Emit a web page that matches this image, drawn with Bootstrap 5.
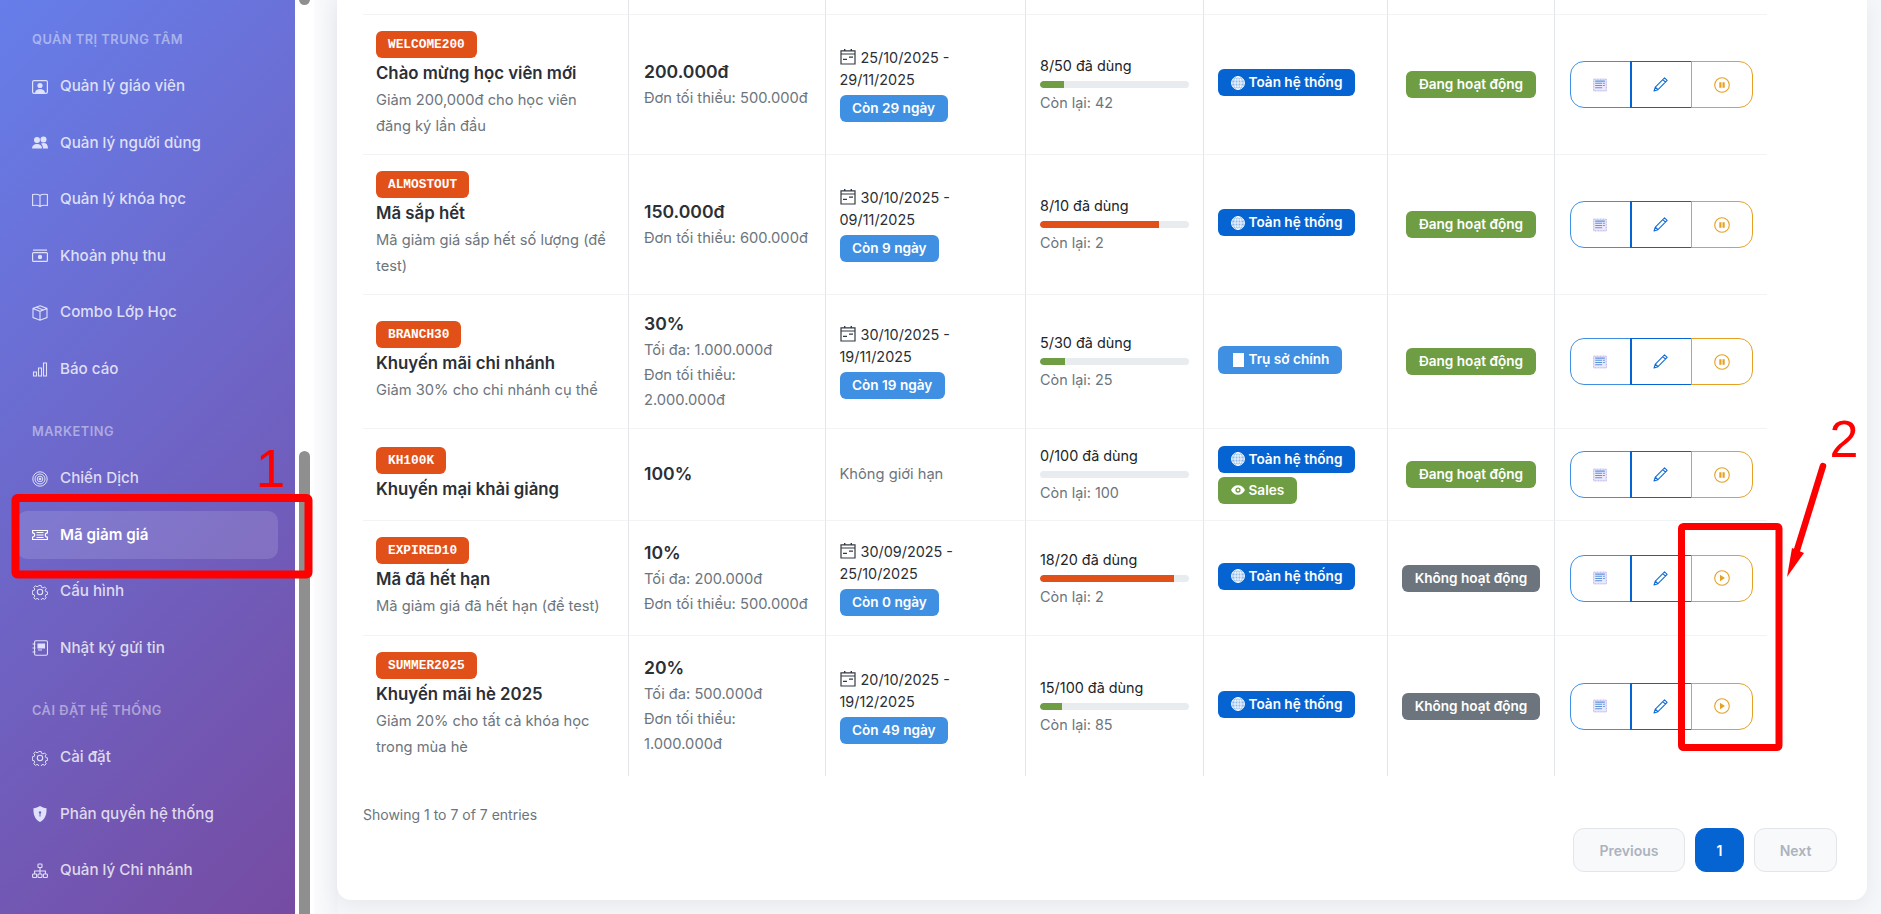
<!doctype html>
<html lang="vi"><head><meta charset="utf-8">
<link rel="stylesheet" href="https://cdn.jsdelivr.net/npm/bootstrap@5.3.0/dist/css/bootstrap.min.css">
<style>
html,body{height:914px;overflow:hidden}
body{font-family:Inter,"Noto Sans",sans-serif;background:linear-gradient(90deg,#fbfbfd 314px,#f2f3f7 337px,#f5f6fa 338px);color:#2b2f36;font-size:14px;position:relative}
.side{width:295px;height:914px;flex:none;background:linear-gradient(135deg,#667eea 0%,#764ba2 100%);padding:29px 16px 0 17px}
.side-head{font-size:12.8px;font-weight:600;letter-spacing:.5px;line-height:22px;height:22px;color:rgba(255,255,255,.45);padding-left:15px;text-transform:uppercase}
.side-head.later{margin-top:28px}
.side-item{display:flex;align-items:center;gap:12px;height:48px;margin-bottom:8.5px;padding-left:15px;border-radius:10px;color:rgba(255,255,255,.78);font-weight:500;font-size:15.2px;text-decoration:none;width:261px}
.side-head + .side-item{margin-top:11.500px}
.side-item.on{background:rgba(255,255,255,.13);color:#fff;font-weight:600}
.side-item svg{width:16px;height:16px;flex:none}
.gutter{width:19px;flex:none;background:#fff;position:relative}
.thumb{position:absolute;left:4px;width:11px;background:#8f8f8f;border-radius:6px}
.thumb.a{top:-8px;height:13px}
.thumb.b{top:451px;height:480px}
.panel{width:1530px;height:900px;flex:none;margin-left:23px;background:#fff;border-radius:0 0 14px 14px;box-shadow:0 5px 20px rgba(0,0,0,.06);padding:0 30px 0 26px}
.promo{table-layout:fixed;width:1404px;margin:0;border-collapse:separate;border-spacing:0}
.promo td{padding:0 14px;border-right:1px solid #e2e5ea;border-bottom:1px solid #f1f3f5;vertical-align:middle;box-shadow:none;color:inherit;background:none}
.promo td:first-child{padding-left:13px}
.promo td:nth-child(2){padding-left:15px}
.promo td:last-child{border-right:0;padding:0;text-align:center}
.promo tr:last-child td{border-bottom:0}
.promo tr.stub td{height:15px}
.r1{height:140px}.r3{height:134px}.r4{height:92px}.r5{height:115px}.r6{height:140px}
.tag{display:inline-block;height:27px;line-height:27px;border-radius:6px;padding:0 12.5px;font-size:13.6px;font-weight:600;color:#fff;white-space:nowrap;vertical-align:top}
.code{font-family:"Liberation Mono",monospace;font-weight:700;font-size:12.8px;background:#e2501a;padding:0 12px}
.nm{font-size:16.8px;font-weight:600;line-height:24px;margin-top:3px;margin-bottom:2px;color:#2b2f36}
.ds{font-size:14.7px;line-height:26px;color:#6c757d}
.val{font-size:17.6px;font-weight:600;line-height:26px;margin-bottom:1px;color:#2b2f36}
.sub{font-size:14.7px;line-height:25px;color:#6c757d}
.dt{font-size:14.4px;line-height:22px;color:#2b2f36}
.dt svg{width:16px;height:16px;vertical-align:-2px;margin-right:1px}
.blue{background:#3f90e2}.prim{background:#0564d1}.grn{background:#6f9d43}.gry{background:#6c757d}
.usetxt{font-size:14.4px;line-height:22px}
.mybar{height:7px;margin:4px 0;background:#e9ecef;border-radius:4px}
.mybar .progress-bar{border-radius:4px 0 0 4px}
.scope{display:inline-flex;align-items:center;gap:4px;margin-bottom:4px}
.scope svg{width:14px;height:14px;flex:none}
.bldg{display:block;width:11px;height:14px;background:#fff;margin:0 1px 0 2px}
.tall{height:28px}
.tagstack{display:flex;flex-direction:column;align-items:flex-start;gap:4px}
.tagstack .scope{margin-bottom:0}
.acts{display:inline-flex;vertical-align:middle}
.act{width:61px;height:47px;display:flex;align-items:center;justify-content:center;background:#fff;padding:0;border:1px solid;border-radius:0;margin-left:-1px}
.act:first-child{width:61px;margin-left:0;border-color:#3f90e2;border-radius:14px 0 0 14px}
.act:nth-child(2){width:62px;border-color:#0564d1;border-left-width:2px;padding-right:2px}
.act:nth-child(3){width:62px;border-color:#e6a023;border-radius:0 14px 14px 0}
.act svg{width:16px;height:16px}
.act:first-child svg{width:14px;height:14px}
.act:nth-child(2) svg{width:15px;height:15px}
.foot{display:flex;flex-direction:column}
.showing{font-size:14px;color:#6c757d;line-height:22px;margin-top:28px}
.pgs{display:flex;justify-content:flex-end;gap:10px;margin-top:2px}
.pg{height:44px;display:flex;align-items:center;justify-content:center;border-radius:11px;font-weight:600;font-size:14px;border:1px solid #e2e5ea;background:#f8f9fb;color:#adb3bd;text-decoration:none}
.pg.now{background:#0564d1;border-color:#0564d1;color:#fff}
.markup{position:absolute;left:0;top:0;width:1881px;height:914px;pointer-events:none}
</style></head><body>
<div class="d-flex">
<nav class="side">
<div class="side-head">Quản trị trung tâm</div>
<a class="side-item" href="#"><svg viewBox="0 0 16 16" fill="#dfe2fa"><path d="M2 1h12a2 2 0 0 1 2 2v10a2 2 0 0 1-2 2H2a2 2 0 0 1-2-2V3a2 2 0 0 1 2-2zm0 1.2a.8.8 0 0 0-.8.8v10c0 .4.4.8.8.8h12c.4 0 .8-.4.8-.8V3a.8.8 0 0 0-.8-.8z"/><circle cx="8" cy="6.5" r="2.6"/><path d="M3 14c.4-3 2.400-4 5-4s4.600 1 5 4z"/></svg>Quản lý giáo viên</a>
<a class="side-item" href="#"><svg viewBox="0 0 16 16" fill="#dfe2fa"><circle cx="5" cy="5" r="3"/><circle cx="11.500" cy="4.500" r="3"/><path d="M0 13.500c0-3 2-4.500 5-4.500s5 1.500 5 4.500zM11 13.500c0-2-.6-3.600-2-4.800.7-.4 1.600-.7 2.500-.7 2.800 0 4.500 1.800 4.500 5.500z"/></svg>Quản lý người dùng</a>
<a class="side-item" href="#"><svg viewBox="0 0 16 16" fill="none" stroke="#dfe2fa" stroke-width="1.100"><path d="M8 3.500C6.500 2.300 3.500 2 .6 2.500v11c2.900-.5 5.900-.2 7.400 1 1.500-1.200 4.500-1.500 7.400-1v-11C12.500 2 9.500 2.300 8 3.500zM8 3.500v11"/></svg>Quản lý khóa học</a>
<a class="side-item" href="#"><svg viewBox="0 0 16 16" fill="#dfe2fa"><path d="M1 1.500h14v1.200H1z"/><path fill-rule="evenodd" d="M1.500 4h13A1.500 1.500 0 0 1 16 5.500v7a1.500 1.500 0 0 1-1.500 1.500h-13A1.500 1.500 0 0 1 0 12.500v-7A1.500 1.500 0 0 1 1.500 4zm0 1.200a.3.3 0 0 0-.3.300v7c0 .2.100.3.300.3h13c.2 0 .3-.1.3-.3v-7a.3.3 0 0 0-.3-.3z"/><circle cx="8" cy="9" r="2.200"/></svg>Khoản phụ thu</a>
<a class="side-item" href="#"><svg viewBox="0 0 16 16" fill="none" stroke="#dfe2fa" stroke-width="1.100"><path d="M8 .8l7 2.700v9L8 15.200l-7-2.700v-9zM1 3.500l7 2.800 7-2.800M8 6.300v8.900M4.500 2.200l7 2.800"/></svg>Combo Lớp Học</a>
<a class="side-item" href="#"><svg viewBox="0 0 16 16" fill="none" stroke="#dfe2fa" stroke-width="1.100"><path d="M1.500 11h3v4h-3zM6.500 7h3v8h-3zM11.500 2h3v13h-3z"/></svg>Báo cáo</a>
<div class="side-head later">Marketing</div>
<a class="side-item" href="#"><svg viewBox="0 0 16 16" fill="none" stroke="#dfe2fa"><circle cx="8" cy="8" r="7.200"/><circle cx="8" cy="8" r="5"/><circle cx="8" cy="8" r="2.800"/><circle cx="8" cy="8" r="1" fill="#dfe2fa"/></svg>Chiến Dịch</a>
<a class="side-item on" href="#"><svg viewBox="0 0 16 16" fill="none" stroke="#fff" stroke-width="1.100"><path d="M.6 3.500h14.800v2.400a2.100 2.100 0 0 0 0 4.200v2.400H.6v-2.400a2.100 2.100 0 0 0 0-4.200zM4.500 5.500h7M4.500 8h7M4.500 10.500h7"/></svg>Mã giảm giá</a>
<a class="side-item" href="#"><svg viewBox="0 0 16 16" fill="none" stroke="#dfe2fa" stroke-width="1.100"><circle cx="8" cy="8" r="2.700"/><path d="M6.700.8h2.600l.4 2 1.600.7 1.800-1.100 1.800 1.800-1.100 1.800.7 1.600 2 .4v2.600l-2 .4-.7 1.600 1.100 1.800-1.800 1.800-1.800-1.100-1.600.7-.4 2H6.700l-.4-2-1.600-.7-1.800 1.100-1.800-1.800 1.100-1.800-.7-1.600-2-.4V6.700l2-.4.7-1.600L1.100 2.900l1.800-1.800 1.800 1.100 1.600-.7z" transform="translate(.8 .8) scale(.9)"/></svg>Cấu hình</a>
<a class="side-item" href="#"><svg viewBox="0 0 16 16" fill="none" stroke="#dfe2fa" stroke-width="1.100"><rect x="2.500" y=".8" width="13" height="14.400" rx="1.500"/><path d="M.5 4h3M.5 8h3M.5 12h3"/><path d="M6 4h6.500v4H6zM6 10h4" fill="#dfe2fa"/></svg>Nhật ký gửi tin</a>
<div class="side-head later">Cài đặt hệ thống</div>
<a class="side-item" href="#"><svg viewBox="0 0 16 16" fill="none" stroke="#dfe2fa" stroke-width="1.100"><circle cx="8" cy="8" r="2.700"/><path d="M6.700.8h2.600l.4 2 1.600.7 1.800-1.100 1.800 1.800-1.100 1.800.7 1.600 2 .4v2.600l-2 .4-.7 1.600 1.100 1.800-1.800 1.800-1.800-1.100-1.600.7-.4 2H6.700l-.4-2-1.600-.7-1.800 1.100-1.800-1.800 1.100-1.800-.7-1.600-2-.4V6.700l2-.4.7-1.600L1.100 2.900l1.800-1.800 1.800 1.100 1.600-.7z" transform="translate(.8 .8) scale(.9)"/></svg>Cài đặt</a>
<a class="side-item" href="#"><svg viewBox="0 0 16 16"><path fill="#dfe2fa" d="M8 0c2 1.300 4.200 2 6.500 2.200.4 6.500-1.500 11-6.500 13.800C3 13.200 1.100 8.700 1.500 2.200 3.800 2 6 1.300 8 0z"/><circle cx="8" cy="6.500" r="1.200" fill="#7060c0"/><path d="M7.500 7.500h1v3h-1z" fill="#7060c0"/></svg>Phân quyền hệ thống</a>
<a class="side-item" href="#"><svg viewBox="0 0 16 16" fill="none" stroke="#dfe2fa" stroke-width="1.100"><rect x="6" y="1" width="4" height="3.500" rx=".8"/><rect x=".6" y="11" width="4" height="3.500" rx=".8"/><rect x="6" y="11" width="4" height="3.500" rx=".8"/><rect x="11.400" y="11" width="4" height="3.500" rx=".8"/><path d="M8 4.500V11M2.600 11V8h10.800v3"/></svg>Quản lý Chi nhánh</a>
</nav>
<div class="gutter"><div class="thumb a"></div><div class="thumb b"></div></div>
<main class="panel">
<svg width="0" height="0" class="position-absolute">
<defs>
<symbol id="cal" viewBox="0 0 16 16"><path fill="none" stroke="#333a42" stroke-width="1.200" d="M1 1.800h14v13.200H1zM1 5h14"/><path fill="#333a42" d="M4 0h1.400v2H4zM10.600 0H12v2h-1.400zM3 9.800h4v1.200H3zM9 7.500h4v1.200H9z"/></symbol>
<symbol id="globe" viewBox="0 0 16 16"><g fill="none" stroke="#fff" stroke-width="1"><circle cx="8" cy="8" r="7.400" fill="#fff" fill-opacity=".55"/><ellipse cx="8" cy="8" rx="3.500" ry="7.400"/><path d="M8 .6v14.800M.6 8h14.800M1.500 4.500h13M1.500 11.500h13"/></g></symbol>
<symbol id="eye" viewBox="0 0 16 16"><path fill="#fff" fill-rule="evenodd" d="M8 2.500c3.500 0 6.300 2.200 8 5.500-1.700 3.300-4.500 5.500-8 5.500S1.700 11.300 0 8c1.700-3.300 4.500-5.500 8-5.500zM8 5a3 3 0 1 0 0 6 3 3 0 0 0 0-6z"/><circle cx="8" cy="8" r="1.500" fill="#fff"/></symbol>
<symbol id="view" viewBox="0 0 16 16"><rect x=".8" y="1.300" width="14.400" height="13.400" fill="#eceafb" stroke="#b6a9ea" stroke-width="1.100" stroke-dasharray="1.200 .6"/><path fill="#5a94de" d="M2.500 2.800h11v1.400h-11zM2.500 5.500h8v1.200h-8zM2.500 8h8v1.200h-8zM2.500 10.500h8v1.200h-8zM11.500 5.500h2v1.200h-2zM11.500 8h2v1.200h-2z"/></symbol>
<symbol id="pen" viewBox="0 0 16 16"><path fill="none" stroke="#0f6ad6" stroke-width="1.150" stroke-linejoin="round" d="M12.300.9l2.800 2.800-9.800 9.800-4.200 1.400 1.400-4.200zM10.500 2.700l2.800 2.800M2.500 10.700l2.800 2.800"/></symbol>
<symbol id="pause" viewBox="0 0 16 16"><circle cx="8" cy="8" r="7.300" fill="none" stroke="#e6a023" stroke-width="1.100"/><path fill="#e6a023" d="M5.300 5.300h2.200v5.400H5.300zM8.500 5.300h2.200v5.400H8.500z"/></symbol>
<symbol id="play" viewBox="0 0 16 16"><circle cx="8" cy="8" r="7.300" fill="none" stroke="#e6a023" stroke-width="1.100"/><path fill="#e6a023" d="M6 4.800l5 3.200-5 3.200z"/></symbol>
</defs></svg>
<table class="table promo">
<colgroup><col style="width:266px"><col style="width:196.500px"><col style="width:200.500px"><col style="width:178px"><col style="width:184px"><col style="width:167px"><col style="width:212px"></colgroup>
<tbody>
<tr class="stub"><td></td><td></td><td></td><td></td><td></td><td></td><td></td></tr>
<tr class="r1">
<td><span class="tag code">WELCOME200</span><div class="nm">Chào mừng học viên mới</div><div class="ds">Giảm 200,000đ cho học viên đăng ký lần đầu</div></td>
<td><div class="val">200.000đ</div><div class="sub">Đơn tối thiểu: 500.000đ</div></td>
<td><div class="dt"><svg><use href="#cal"/></svg> 25/10/2025 - 29/11/2025</div><span class="tag blue mt-1">Còn 29 ngày</span></td>
<td><div class="usetxt">8/50 đã dùng</div><div class="progress mybar"><div class="progress-bar grn" style="width:16%"></div></div><div class="usetxt text-secondary">Còn lại: 42</div></td>
<td><span class="tag prim scope"><svg><use href="#globe"/></svg>Toàn hệ thống</span></td>
<td class="text-center"><span class="tag grn">Đang hoạt động</span></td>
<td><div class="acts"><button class="btn act"><svg><use href="#view"/></svg></button><button class="btn act"><svg><use href="#pen"/></svg></button><button class="btn act"><svg><use href="#pause"/></svg></button></div></td>
</tr>
<tr class="r1">
<td><span class="tag code">ALMOSTOUT</span><div class="nm">Mã sắp hết</div><div class="ds">Mã giảm giá sắp hết số lượng (để test)</div></td>
<td><div class="val">150.000đ</div><div class="sub">Đơn tối thiểu: 600.000đ</div></td>
<td><div class="dt"><svg><use href="#cal"/></svg> 30/10/2025 - 09/11/2025</div><span class="tag blue mt-1">Còn 9 ngày</span></td>
<td><div class="usetxt">8/10 đã dùng</div><div class="progress mybar"><div class="progress-bar" style="width:80%;background:#e2501a"></div></div><div class="usetxt text-secondary">Còn lại: 2</div></td>
<td><span class="tag prim scope"><svg><use href="#globe"/></svg>Toàn hệ thống</span></td>
<td class="text-center"><span class="tag grn">Đang hoạt động</span></td>
<td><div class="acts"><button class="btn act"><svg><use href="#view"/></svg></button><button class="btn act"><svg><use href="#pen"/></svg></button><button class="btn act"><svg><use href="#pause"/></svg></button></div></td>
</tr>
<tr class="r3">
<td><span class="tag code">BRANCH30</span><div class="nm">Khuyến mãi chi nhánh</div><div class="ds">Giảm 30% cho chi nhánh cụ thể</div></td>
<td><div class="val">30%</div><div class="sub">Tối đa: 1.000.000đ</div><div class="sub">Đơn tối thiểu: 2.000.000đ</div></td>
<td><div class="dt"><svg><use href="#cal"/></svg> 30/10/2025 - 19/11/2025</div><span class="tag blue mt-1">Còn 19 ngày</span></td>
<td><div class="usetxt">5/30 đã dùng</div><div class="progress mybar"><div class="progress-bar grn" style="width:16.670%"></div></div><div class="usetxt text-secondary">Còn lại: 25</div></td>
<td><span class="tag blue scope tall"><i class="bldg"></i>Trụ sở chính</span></td>
<td class="text-center"><span class="tag grn">Đang hoạt động</span></td>
<td><div class="acts"><button class="btn act"><svg><use href="#view"/></svg></button><button class="btn act"><svg><use href="#pen"/></svg></button><button class="btn act"><svg><use href="#pause"/></svg></button></div></td>
</tr>
<tr class="r4">
<td><span class="tag code">KH100K</span><div class="nm">Khuyến mại khải giảng</div></td>
<td><div class="val">100%</div></td>
<td><div class="sub">Không giới hạn</div></td>
<td><div class="usetxt">0/100 đã dùng</div><div class="progress mybar"><div class="progress-bar grn" style="width:0%"></div></div><div class="usetxt text-secondary">Còn lại: 100</div></td>
<td><div class="tagstack"><span class="tag prim scope"><svg><use href="#globe"/></svg>Toàn hệ thống</span><span class="tag grn scope"><svg><use href="#eye"/></svg>Sales</span></div></td>
<td class="text-center"><span class="tag grn">Đang hoạt động</span></td>
<td><div class="acts"><button class="btn act"><svg><use href="#view"/></svg></button><button class="btn act"><svg><use href="#pen"/></svg></button><button class="btn act"><svg><use href="#pause"/></svg></button></div></td>
</tr>
<tr class="r5">
<td><span class="tag code">EXPIRED10</span><div class="nm">Mã đã hết hạn</div><div class="ds">Mã giảm giá đã hết hạn (để test)</div></td>
<td><div class="val">10%</div><div class="sub">Tối đa: 200.000đ</div><div class="sub">Đơn tối thiểu: 500.000đ</div></td>
<td><div class="dt"><svg><use href="#cal"/></svg> 30/09/2025 - 25/10/2025</div><span class="tag blue mt-1">Còn 0 ngày</span></td>
<td><div class="usetxt">18/20 đã dùng</div><div class="progress mybar"><div class="progress-bar" style="width:90%;background:#e2501a"></div></div><div class="usetxt text-secondary">Còn lại: 2</div></td>
<td><span class="tag prim scope"><svg><use href="#globe"/></svg>Toàn hệ thống</span></td>
<td class="text-center"><span class="tag gry">Không hoạt động</span></td>
<td><div class="acts"><button class="btn act"><svg><use href="#view"/></svg></button><button class="btn act"><svg><use href="#pen"/></svg></button><button class="btn act"><svg><use href="#play"/></svg></button></div></td>
</tr>
<tr class="r6">
<td><span class="tag code">SUMMER2025</span><div class="nm">Khuyến mãi hè 2025</div><div class="ds">Giảm 20% cho tất cả khóa học trong mùa hè</div></td>
<td><div class="val">20%</div><div class="sub">Tối đa: 500.000đ</div><div class="sub">Đơn tối thiểu: 1.000.000đ</div></td>
<td><div class="dt"><svg><use href="#cal"/></svg> 20/10/2025 - 19/12/2025</div><span class="tag blue mt-1">Còn 49 ngày</span></td>
<td><div class="usetxt">15/100 đã dùng</div><div class="progress mybar"><div class="progress-bar grn" style="width:15%"></div></div><div class="usetxt text-secondary">Còn lại: 85</div></td>
<td><span class="tag prim scope"><svg><use href="#globe"/></svg>Toàn hệ thống</span></td>
<td class="text-center"><span class="tag gry">Không hoạt động</span></td>
<td><div class="acts"><button class="btn act"><svg><use href="#view"/></svg></button><button class="btn act"><svg><use href="#pen"/></svg></button><button class="btn act"><svg><use href="#play"/></svg></button></div></td>
</tr>
</tbody></table>
<div class="foot">
<div class="showing">Showing 1 to 7 of 7 entries</div>
<div class="pgs"><a class="pg" style="width:112px" href="#">Previous</a><a class="pg now" style="width:49px" href="#">1</a><a class="pg" style="width:83px" href="#">Next</a></div>
</div>
</main>
</div>
<svg class="markup" viewBox="0 0 1881 914">
<rect x="15.500" y="498" width="293" height="76.500" rx="2" fill="none" stroke="#ff0000" stroke-width="8"/>
<rect x="1681.500" y="526.500" width="97.500" height="221" rx="2" fill="none" stroke="#ff0000" stroke-width="7"/>
<path d="M1823 466L1797 550" stroke="#ff0000" stroke-width="6.500" stroke-linecap="round" fill="none"/>
<path d="M1787 577L1792 548 L1804 553z" fill="#ff0000"/>
<text x="270.500" y="487" text-anchor="middle" font-family="Liberation Sans,sans-serif" font-size="53" fill="#ff0000">1</text>
<text x="1844" y="457" text-anchor="middle" font-family="Liberation Sans,sans-serif" font-size="52" fill="#ff0000">2</text>
</svg>
</body></html>
